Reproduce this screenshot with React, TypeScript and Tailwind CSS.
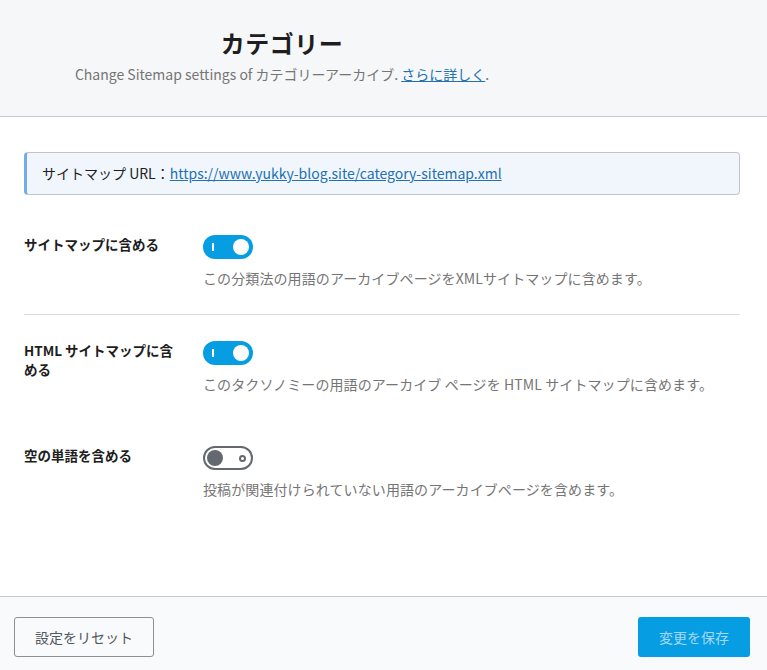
import React from "react";

function Toggle({ on }: { on: boolean }) {
  if (on) {
    return (
      <button className="flex h-[24px] w-[50px] items-center justify-between rounded-full bg-[#069de3] pl-[9px] pr-[4px]">
        <span className="h-[8px] w-[2px] bg-white" />
        <span className="h-[16px] w-[16px] rounded-full bg-white" />
      </button>
    );
  }
  return (
    <button className="flex h-[24px] w-[50px] items-center justify-between rounded-full border-2 border-[#646970] bg-white pl-[2px] pr-[5px]">
      <span className="h-[16px] w-[16px] rounded-full bg-[#646970]" />
      <span className="h-[7px] w-[7px] rounded-full border-2 border-[#646970]" />
    </button>
  );
}

function SettingRow({
  label,
  desc,
  on,
  divider,
}: {
  label: string;
  desc: string;
  on: boolean;
  divider?: boolean;
}) {
  return (
    <div className={"flex py-[26px] " + (divider ? "border-b border-[#dcdcde]" : "")}>
      <div className="w-[160px] shrink-0 text-[13.5px] font-bold leading-[19px] text-[#1e1e1e]">
        {label}
      </div>
      <div className="ml-[19px] flex flex-col gap-[9px]">
        <Toggle on={on} />
        <p className="text-[14px] leading-[20px] tracking-[0.1px] text-[#757575]">{desc}</p>
      </div>
    </div>
  );
}

export default function App() {
  return (
    <div className="flex h-[670px] flex-col bg-white font-['Noto_Sans_CJK_JP',sans-serif]">
      <div className="h-[117px] shrink-0 border-b border-[#c5c9d1] bg-[#f6f7f9]">
        <div className="flex w-[564px] flex-col items-center pt-[26px]">
          <h1 className="text-[24px] font-bold leading-[34px] tracking-[0.5px] text-[#1e1e1e]">
            カテゴリー
          </h1>
          <p className="mt-[4px] text-[14px] leading-[20px] text-[#757575]">
            Change Sitemap settings of カテゴリーアーカイブ.{" "}
            <a href="#" className="text-[#2271b1] underline">
              さらに詳しく
            </a>
            .
          </p>
        </div>
      </div>

      <div className="flex-1 pl-6 pr-[27px] pt-[35px]">
        <div className="flex h-[43px] items-center rounded-[4px] border border-l-[3px] border-[#c3c4c7] border-l-[#72aee6] bg-[#f0f6fc] pl-[15px] text-[14px] text-[#1e1e1e]">
          サイトマップ URL：
          <a href="#" className="text-[#2271b1] underline">
            https://www.yukky-blog.site/category-sitemap.xml
          </a>
        </div>

        <div className="mt-[14px]">
          <SettingRow
            label="サイトマップに含める"
            desc="この分類法の用語のアーカイブページをXMLサイトマップに含めます。"
            on
            divider
          />
          <SettingRow
            label="HTML サイトマップに含める"
            desc="このタクソノミーの用語のアーカイブ ページを HTML サイトマップに含めます。"
            on
          />
          <SettingRow
            label="空の単語を含める"
            desc="投稿が関連付けられていない用語のアーカイブページを含めます。"
            on={false}
          />
        </div>
      </div>

      <div className="flex h-[74px] shrink-0 items-start justify-between border-t border-[#c5c9d1] bg-[#f9fafb] pl-[14px] pr-[17px] pt-[20px]">
        <button className="h-[40px] w-[140px] rounded-[3px] border border-[#8c8f94] text-[14px] text-[#50575e]">
          設定をリセット
        </button>
        <button className="h-[40px] w-[112px] rounded-[3px] bg-[#069de3] text-[14px] text-[#a3d9f3]">
          変更を保存
        </button>
      </div>
    </div>
  );
}
